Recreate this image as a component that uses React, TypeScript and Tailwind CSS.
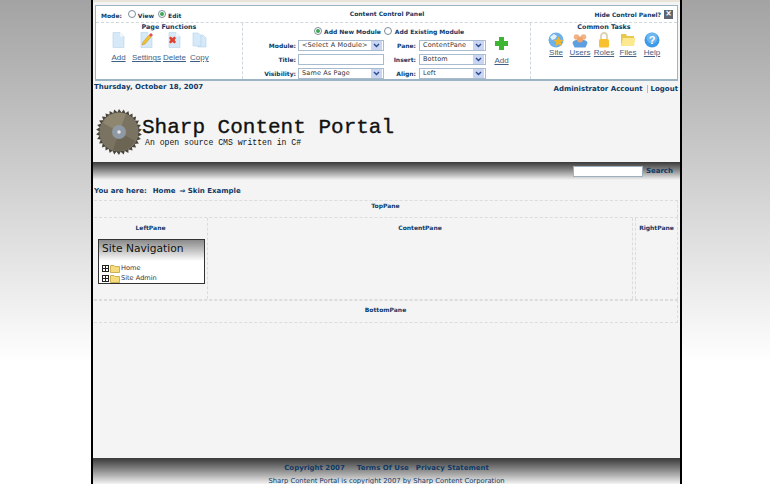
import React from 'react';

const navy = 'text-[#0f3a66]';
const verdana = "font-['Verdana','DejaVu_Sans',sans-serif]";
const linkText = "font-['Liberation_Sans',sans-serif] text-[8px] leading-none text-[#3f5f85] underline";

function Radio({ on }: { on?: boolean }) {
  return (
    <span className="inline-flex h-[8px] w-[8px] shrink-0 items-center justify-center rounded-full border border-[#7d8b98] bg-white">
      {on && <span className="h-[4px] w-[4px] rounded-full bg-[#3aa655]" />}
    </span>
  );
}

function FakeSelect({ text, w }: { text: string; w: string }) {
  return (
    <div className={`flex h-[11px] items-center justify-between border border-[#a9bccf] bg-white pl-[3px] pr-px ${w}`}>
      <span className="whitespace-nowrap text-[6.5px] leading-none font-normal tracking-[0.15px] text-[#333]">{text}</span>
      <span className="flex h-[9px] w-[11px] items-center justify-center bg-[#c9d5f2]">
        <svg width="7" height="5" viewBox="0 0 7 5">
          <path d="M1 1l2.5 2.5L6 1" fill="none" stroke="#2b4a8a" strokeWidth="1.4" />
        </svg>
      </span>
    </div>
  );
}

function PageIcon({ kind }: { kind: 'add' | 'settings' | 'delete' | 'copy' }) {
  return (
    <svg width="15" height="16" viewBox="0 0 15 16">
      {kind === 'copy' && <path d="M6 3h5l3 3v9H6z" fill="#d5e9f9" stroke="#b5d3ea" strokeWidth="0.6" />}
      <path d={kind === 'copy' ? 'M1 1h5l3 3v10H1z' : 'M2 0.5h7l4 4v11H2z'} fill="#d5e9f9" stroke="#b5d3ea" strokeWidth="0.6" />
      {kind !== 'copy' && <path d="M9 0.5v4h4z" fill="#f3f9fe" />}
      {kind === 'settings' && <path d="M3 13l1-3 6-7 2 2-6 7z" fill="#f1c232" stroke="#c98a1a" strokeWidth="0.5" />}
      {kind === 'settings' && <path d="M10 3l2-2 2 2-2 2z" fill="#d9534f" />}
      {kind === 'delete' && <path d="M2 6l1.5-1.5L5.5 6l2-1.5L9 6 7.5 8 9 10l-1.5 1.5-2-1.5-2 1.5L2 10l1.5-2z" fill="#e0402f" />}
    </svg>
  );
}

function TaskIcon({ kind }: { kind: 'site' | 'users' | 'roles' | 'files' | 'help' }) {
  if (kind === 'site')
    return (
      <svg width="16" height="16" viewBox="0 0 16 16">
        <circle cx="8" cy="8" r="7.5" fill="#6db0ea" />
        <path d="M2 5l4-3 3 2-2 3-3 1z" fill="#e2f1fb" />
        <path d="M10.5 6l1 2.2 2.3.3-1.7 1.6.5 2.4-2.1-1.2-2.1 1.2.5-2.4-1.7-1.6 2.3-.3z" fill="#efb62a" stroke="#efb62a" strokeWidth="1.4" />
      </svg>
    );
  if (kind === 'users')
    return (
      <svg width="16" height="16" viewBox="0 0 16 16">
        <circle cx="4.5" cy="5" r="2.8" fill="#f0b48a" />
        <circle cx="11.5" cy="5" r="2.8" fill="#f0b48a" />
        <path d="M0.5 11c1-3 3-3 5-3h5c2 0 4 0 5 3l-2 4.5H2.5z" fill="#5e9fe0" />
        <circle cx="8" cy="7.5" r="3" fill="#f3a36a" />
      </svg>
    );
  if (kind === 'roles')
    return (
      <svg width="16" height="16" viewBox="0 0 16 16">
        <path d="M5 7V4a3 3 0 016 0v3" fill="none" stroke="#dcd2b4" strokeWidth="1.8" />
        <rect x="3" y="7" width="10" height="8.5" rx="1.5" fill="#f7c02e" />
      </svg>
    );
  if (kind === 'files')
    return (
      <svg width="16" height="16" viewBox="0 0 16 16">
        <path d="M1 2h5l1 2h7v10H1z" fill="#e9c84e" />
        <path d="M3 6h12.5L14 14H1z" fill="#fbe88f" />
      </svg>
    );
  return (
    <svg width="16" height="16" viewBox="0 0 16 16">
      <circle cx="8" cy="8" r="7.5" fill="#3f9be8" />
      <circle cx="8" cy="6" r="5.5" fill="#8cc8f4" opacity="0.6" />
      <text x="8" y="12" textAnchor="middle" fontSize="11" fontWeight="700" fill="#fff" fontFamily="Liberation Sans, sans-serif">?</text>
    </svg>
  );
}

function SawBlade() {
  const teeth = Array.from({ length: 30 }, (_, i) => (i * 360) / 30);
  return (
    <svg width="46" height="48" viewBox="0 0 46 48" className="shrink-0">
      {teeth.map(a => (
        <path key={a} d="M23 1l3 4-5 0z" fill="#4a463c" transform={`rotate(${a} 23 24)`} />
      ))}
      <circle cx="23" cy="24" r="19.5" fill="#7b7361" />
      <path d="M7 15a18 18 0 0123-9l-7 18z" fill="#8f866f" />
      <path d="M39 33a18 18 0 01-22 9l6-18z" fill="#6d6554" />
      <circle cx="23" cy="24" r="7" fill="#8e99a5" />
      <circle cx="23" cy="24" r="1.8" fill="#e8e8e8" />
    </svg>
  );
}

function FolderIcon() {
  return (
    <svg width="10" height="9" viewBox="0 0 10 9" className="shrink-0">
      <path d="M0.5 1.5h3.5l1 1h4.5v6h-9z" fill="#f7dc7c" stroke="#b8962e" strokeWidth="0.7" />
    </svg>
  );
}

function PlusBox() {
  return (
    <span className="relative mr-px h-[7px] w-[7px] shrink-0 border border-[#222] bg-white">
      <span className="absolute left-0 right-0 top-[2px] h-px bg-[#222]" />
      <span className="absolute bottom-0 left-[2px] top-0 w-px bg-[#222]" />
    </span>
  );
}

function ControlPanel() {
  return (
    <div className={`mx-[2px] mt-[3px] h-[76px] border border-b-2 border-[#9db4c4] bg-white ${verdana}`}>
      <div className={`flex h-[16px] items-center pl-[5px] pr-[4px] text-[6px] font-bold whitespace-nowrap ${navy}`}>
        <div className="mt-[2px] flex flex-1 items-center">
          <span>Mode:</span>
          <span className="-mt-[3px] ml-[6px] flex"><Radio /></span>
          <span className="ml-[2px]">View</span>
          <span className="-mt-[3px] ml-[4px] flex"><Radio on /></span>
          <span className="ml-[2px]">Edit</span>
        </div>
        <span className="-mt-[2px]">Content Control Panel</span>
        <div className="mt-[1px] flex flex-1 items-center justify-end gap-[3px]">
          Hide Control Panel?
          <span className="-mt-[1px] flex h-[9px] w-[9px] items-center justify-center bg-[#5d6670] text-[8px] leading-none text-white">×</span>
        </div>
      </div>
      <div className="flex h-[57px] border-t border-dashed border-[#cfd8dc]">
        <div className="w-[147px] border-r border-dashed border-[#cfd8dc]">
          <div className={`text-center text-[6.4px] leading-[9px] font-bold ${navy}`}>Page Functions</div>
          <div className="ml-[15px] flex">
            {([['Add', 'add', 'mr-[6px]'], ['Settings', 'settings', 'mr-[2px]'], ['Delete', 'delete', 'mr-[4px]'], ['Copy', 'copy', '']] as const).map(([label, kind, gap]) => (
              <div key={label} className={`flex flex-col items-center gap-[6px] ${gap}`}>
                <PageIcon kind={kind} />
                <span className={linkText}>{label}</span>
              </div>
            ))}
          </div>
        </div>
        <div className="w-[288px] border-r border-dashed border-[#cfd8dc]">
          <div className={`ml-[71px] mt-[3px] flex h-[11px] items-center text-[6px] font-bold whitespace-nowrap ${navy}`}>
            <span className="-mt-[2px] flex"><Radio on /></span>
            <span className="ml-[2px]">Add New Module</span>
            <span className="-mt-[2px] ml-[3px] flex"><Radio /></span>
            <span className="ml-[3px]">Add Existing Module</span>
          </div>
          <div className="mt-[3px] flex">
            <div className={`flex w-[141px] flex-col gap-[3px] text-[6px] font-bold ${navy}`}>
              {[['Module:', '<Select A Module>'], ['Title:', ''], ['Visibility:', 'Same As Page']].map(([l, v], i) => (
                <div key={l} className="flex items-center justify-end gap-[2px]">
                  <span>{l}</span>
                  {i === 1 ? <div className="h-[11px] w-[86px] border border-[#a9bccf] bg-white" /> : <FakeSelect text={v} w="w-[86px]" />}
                </div>
              ))}
            </div>
            <div className={`flex w-[102px] flex-col gap-[3px] text-[6px] font-bold ${navy}`}>
              {[['Pane:', 'ContentPane'], ['Insert:', 'Bottom'], ['Align:', 'Left']].map(([l, v]) => (
                <div key={l} className="flex items-center justify-end gap-[3px]">
                  <span>{l}</span>
                  <FakeSelect text={v} w="w-[67px]" />
                </div>
              ))}
            </div>
            <div className="ml-[8px] -mt-[4px] flex flex-col items-center">
              <svg width="15" height="15" viewBox="0 0 15 15">
                <path d="M5 1h5v4h4v5h-4v4H5v-4H1V5h4z" fill="#3fb534" />
              </svg>
              <span className={`mt-[6px] ${linkText}`}>Add</span>
            </div>
          </div>
        </div>
        <div className="flex-1">
          <div className={`text-center text-[6.4px] leading-[9px] font-bold ${navy}`}>Common Tasks</div>
          <div className="ml-[13px] flex">
            {([['Site', 'site'], ['Users', 'users'], ['Roles', 'roles'], ['Files', 'files'], ['Help', 'help']] as const).map(([label, kind]) => (
              <div key={label} className="flex w-[24px] flex-col items-center gap-[1px]">
                <TaskIcon kind={kind} />
                <span className={linkText}>{label}</span>
              </div>
            ))}
          </div>
        </div>
      </div>
    </div>
  );
}

function PaneLabel({ children }: { children: string }) {
  return <div className={`text-center text-[6px] leading-[8px] font-bold ${verdana} ${navy}`}>{children}</div>;
}

export default function App() {
  return (
    <div className="h-[484px] overflow-hidden bg-gradient-to-b from-[#a3a3a3] from-0% to-white to-[75%]">
      <div className="ml-[91px] h-[484px] w-[591px] overflow-hidden border-x-2 border-black bg-[#f4f4f4]">
        <div className="h-[2px] bg-[#e8e4d8]" />
        <ControlPanel />

        <div className={`flex h-[10px] items-start justify-between pl-[1px] pr-[2px] pt-[2px] text-[7px] leading-[8px] font-bold ${verdana} ${navy}`}>
          <span>Thursday, October 18, 2007</span>
          <span className="mt-[2px] flex">
            Administrator Account
            <span className="ml-[4px] border-l border-[#bbb] pl-[3px]">Logout</span>
          </span>
        </div>

        <div className="flex h-[71px] pl-[3px] pt-[17px]">
          <SawBlade />
          <div className="mt-[9px] font-['Liberation_Mono',monospace] whitespace-nowrap text-[#111]">
            <div className="text-[21px] leading-[22px] [-webkit-text-stroke:0.35px_#111]">Sharp Content Portal</div>
            <div className="ml-[3px] -mt-[1px] text-[8.15px] leading-[10px]">An open source CMS written in C#</div>
          </div>
        </div>

        <div className="flex h-[18px] items-center justify-end bg-gradient-to-b from-[#3a3a3a] to-[#f4f4f4] pr-[7px]">
          <div className="h-[11px] w-[70px] border border-[#9fb0bf] bg-white" />
          <span className={`ml-[3px] text-[7px] font-bold ${verdana} ${navy}`}>Search</span>
        </div>

        <div className={`flex h-[20px] items-center gap-[4px] pl-[1px] pt-[2px] text-[7px] font-bold whitespace-nowrap ${verdana} ${navy}`}>
          You are here: <span className="ml-[2px]">Home</span> ⇒ Skin Example
        </div>

        <div className="ml-[1px] mr-[2px] h-[17px] border-r border-t border-dashed border-[#dcdcdc] pt-[1px]">
          <PaneLabel>TopPane</PaneLabel>
        </div>

        <div className="ml-[1px] mr-[2px] flex h-[83px] border-y border-r border-dashed border-[#dcdcdc]">
          <div className="w-[114px] border-r border-dashed border-[#dcdcdc] pt-[6px]">
            <PaneLabel>LeftPane</PaneLabel>
            <div className="ml-[4px] mt-[7px] h-[45px] w-[107px] border border-[#333] bg-white">
              <div className="h-[21px] bg-gradient-to-b from-[#8a8a8a] to-white pl-[3px] pt-[2px] font-['DejaVu_Sans',sans-serif] text-[10.7px] leading-[14px] text-[#111]">Site Navigation</div>
              <div className="flex flex-col gap-px pl-[3px] pt-[3px] font-['DejaVu_Sans',sans-serif] text-[6.6px] leading-[9px] text-[#333]">
                {['Home', 'Site Admin'].map(t => (
                  <div key={t} className="flex items-center">
                    <PlusBox />
                    <FolderIcon />
                    <span className="ml-px">{t}</span>
                  </div>
                ))}
              </div>
            </div>
          </div>
          <div className="flex-1 border-r border-dashed border-[#dcdcdc] pt-[6px]">
            <PaneLabel>ContentPane</PaneLabel>
          </div>
          <div className="ml-[2px] w-[42px] border-l border-dashed border-[#dcdcdc] pt-[6px]">
            <PaneLabel>RightPane</PaneLabel>
          </div>
        </div>

        <div className="ml-[1px] mr-[2px] h-[23px] border-y border-r border-dashed border-[#dcdcdc] pt-[5px]">
          <PaneLabel>BottomPane</PaneLabel>
        </div>

        <div className="h-[135px]" />

        <div className="flex h-[26px] flex-col items-center bg-gradient-to-b from-[#3a3a3a] to-[#f4f4f4]">
          <div className={`mt-[6px] flex gap-[12px] text-[7px] leading-[9px] font-bold ${verdana} ${navy}`}>
            <span>Copyright 2007</span>
            <span className="flex gap-[7px]"><span>Terms Of Use</span><span>Privacy Statement</span></span>
          </div>
          <div className="mt-[4px] whitespace-nowrap font-['DejaVu_Sans',sans-serif] text-[6.8px] leading-[8px] text-[#0f3a66]">Sharp Content Portal is copyright 2007 by Sharp Content Corporation</div>
        </div>
      </div>
    </div>
  );
}
